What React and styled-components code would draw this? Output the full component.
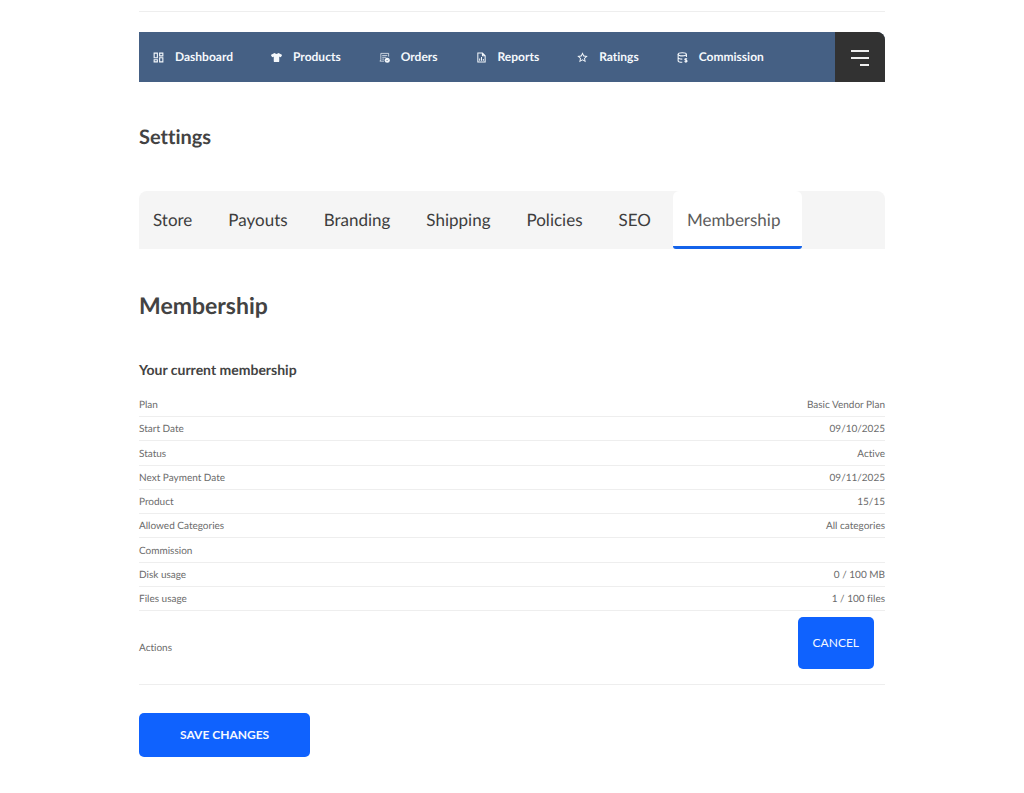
// Vendor settings page, membership tab
import React from 'react';
import styled, { createGlobalStyle } from 'styled-components';
import { RiStarLine } from 'react-icons/ri';
import { FaTshirt } from 'react-icons/fa';

const GlobalStyle = createGlobalStyle`
    * {
        box-sizing: border-box;
    }
    body {
        margin: 0;
        background: #fff;
        color: #434343;
        font-family: Lato, "Liberation Sans", sans-serif;
        font-variant-ligatures: none;
        text-rendering: geometricPrecision;
    }
`;

const Page = styled.main`
    max-width: 746px;
    margin: 0 auto;
    padding: 11px 0 36px;
`;

const Divider = styled.hr`
    margin: 0 0 20px;
    border: none;
    border-top: 1px solid #eee;
`;

const Navbar = styled.nav`
    display: flex;
    align-items: stretch;
    height: 50px;
    background: #456084;
    border-radius: 0 8px 0 0;
    overflow: hidden;
`;

const NavLinks = styled.div`
    flex: 1;
    display: flex;
    align-items: center;
    gap: 38px;
    padding-left: 14px;
`;

const NavLink = styled.a`
    display: flex;
    align-items: center;
    gap: 11px;
    color: #f4f8fc;
    font-size: 12px;
    font-weight: 700;
    line-height: 16px;
    text-decoration: none;
    svg {
        width: 11px;
        height: 11px;
    }
`;

const MenuButton = styled.button`
    display: flex;
    align-items: center;
    justify-content: center;
    width: 50px;
    padding: 0;
    border: none;
    background: #323232;
    color: #f0f0f0;
    cursor: pointer;
`;

const PageTitle = styled.h1`
    margin: 41px 0 39px;
    font-size: 20px;
    font-weight: 700;
    line-height: 29px;
`;

const Tabs = styled.nav`
    display: flex;
    height: 58px;
    background: #f5f5f5;
    border-radius: 8px 8px 0 0;
`;

const Tab = styled.a`
    display: flex;
    align-items: center;
    padding: 3px 22px 0 14px;
    border-bottom: 3px solid ${(props) => (props.$active ? '#1463ea' : 'transparent')};
    border-radius: 6px 6px 3px 3px;
    background: ${(props) => (props.$active ? '#fff' : 'transparent')};
    color: ${(props) => (props.$active ? '#5c5c5c' : '#3d3d3d')};
    font-size: 17px;
    line-height: 24px;
    text-decoration: none;
`;

const SectionTitle = styled.h2`
    margin: 40px 0 39px;
    font-size: 23px;
    font-weight: 700;
    line-height: 32px;
`;

const SubTitle = styled.h3`
    margin: 0 0 13px;
    font-size: 14px;
    font-weight: 700;
    line-height: 20px;
`;

const Table = styled.table`
    width: 100%;
    height: 292px;
    border-collapse: collapse;
    color: #6b6b6b;
    font-size: 10px;
    line-height: 15px;
    th,
    td {
        padding: 5px 0 3px;
        border-bottom: 1px solid #eee;
    }
    th {
        font-weight: 400;
        text-align: left;
    }
    td {
        text-align: right;
    }
`;

const Button = styled.button`
    border: none;
    border-radius: 5px;
    background: #0f62fe;
    color: #f4f8ff;
    font-family: inherit;
    line-height: 16px;
    text-transform: uppercase;
    cursor: pointer;
`;

const CancelButton = styled(Button)`
    margin: 0 11px 12px 0;
    padding: 18px 15px;
    font-size: 12px;
`;

const SaveButton = styled(Button)`
    margin-top: 28px;
    padding: 14px 41px;
    font-size: 12px;
    font-weight: 700;
`;

const DashboardIcon = () => (
    <svg viewBox="0 0 24 24" fill="none" stroke="currentColor" strokeWidth="2.4">
        <path d="M2.500 2.500h7v10h-7zM14.500 2.500h7v6h-7zM2.500 17h7v4.500h-7zM14.500 12.500h7v9h-7z" />
    </svg>
);

const OrdersIcon = () => (
    <svg viewBox="0 0 24 24" fill="none" stroke="currentColor" strokeWidth="1.6">
        <path d="M21 10V3H4v14l-2 3h9M7 7.5h11M7 11.5h9M7 15.5h4" />
        <circle cx="18" cy="18" r="5.5" fill="currentColor" stroke="none" />
        <path d="M16 18l1.5 1.5L20 17" stroke="#456084" strokeWidth="1.2" />
    </svg>
);

const ReportsIcon = () => (
    <svg viewBox="0 0 24 24" fill="none" stroke="currentColor" strokeWidth="2.2">
        <path d="M14 2H4v20h16V8zM14 2v6h6M8 19v-5M12 19v-8M16 19v-4" />
    </svg>
);

const CommissionIcon = () => (
    <svg viewBox="0 0 24 24" fill="none" stroke="currentColor" strokeWidth="2.4">
        <ellipse cx="11.5" cy="5" rx="9" ry="3.5" />
        <path d="M2.5 5v14c0 1.8 4 3.5 9 3.5M20.5 5v6M2.5 12c0 2 4 3.5 9 3.5" />
        <path d="M22 15.5c-1-1-5-1.3-5 .8 0 2.2 5 1.2 5 3.4 0 2.1-4 2-5.5.6M19.5 13v10.5" />
    </svg>
);

const MenuIcon = () => (
    <svg width="18" height="18" viewBox="0 0 18 18" fill="currentColor">
        <path d="M0 2h18v2H0zM0 9h18v2H0zM9 16h9v2H9z" />
    </svg>
);

const links = [
    { name: 'Dashboard', Icon: DashboardIcon },
    { name: 'Products', Icon: FaTshirt },
    { name: 'Orders', Icon: OrdersIcon },
    { name: 'Reports', Icon: ReportsIcon },
    { name: 'Ratings', Icon: RiStarLine },
    { name: 'Commission', Icon: CommissionIcon },
];

const tabs = ['Store', 'Payouts', 'Branding', 'Shipping', 'Policies', 'SEO', 'Membership'];

const membership = [
    ['Plan', 'Basic Vendor Plan'],
    ['Start Date', '09/10/2025'],
    ['Status', 'Active'],
    ['Next Payment Date', '09/11/2025'],
    ['Product', '15/15'],
    ['Allowed Categories', 'All categories'],
    ['Commission', ''],
    ['Disk usage', '0 / 100 MB'],
    ['Files usage', '1 / 100 files'],
];

const App = () => (
    <>
        <GlobalStyle />
        <Page>
            <Divider />
            <Navbar>
                <NavLinks>
                    {links.map(({ name, Icon }) => (
                        <NavLink key={name} href="#">
                            <Icon />
                            {name}
                        </NavLink>
                    ))}
                </NavLinks>
                <MenuButton type="button" aria-label="Menu">
                    <MenuIcon />
                </MenuButton>
            </Navbar>
            <PageTitle>Settings</PageTitle>
            <Tabs>
                {tabs.map((tab) => (
                    <Tab key={tab} href="#" $active={tab === 'Membership'}>
                        {tab}
                    </Tab>
                ))}
            </Tabs>
            <SectionTitle>Membership</SectionTitle>
            <SubTitle>Your current membership</SubTitle>
            <Table>
                <tbody>
                    {membership.map(([label, value]) => (
                        <tr key={label}>
                            <th scope="row">{label}</th>
                            <td>{value}</td>
                        </tr>
                    ))}
                    <tr>
                        <th scope="row">Actions</th>
                        <td>
                            <CancelButton type="button">Cancel</CancelButton>
                        </td>
                    </tr>
                </tbody>
            </Table>
            <SaveButton type="submit">Save changes</SaveButton>
        </Page>
    </>
);

export default App;
